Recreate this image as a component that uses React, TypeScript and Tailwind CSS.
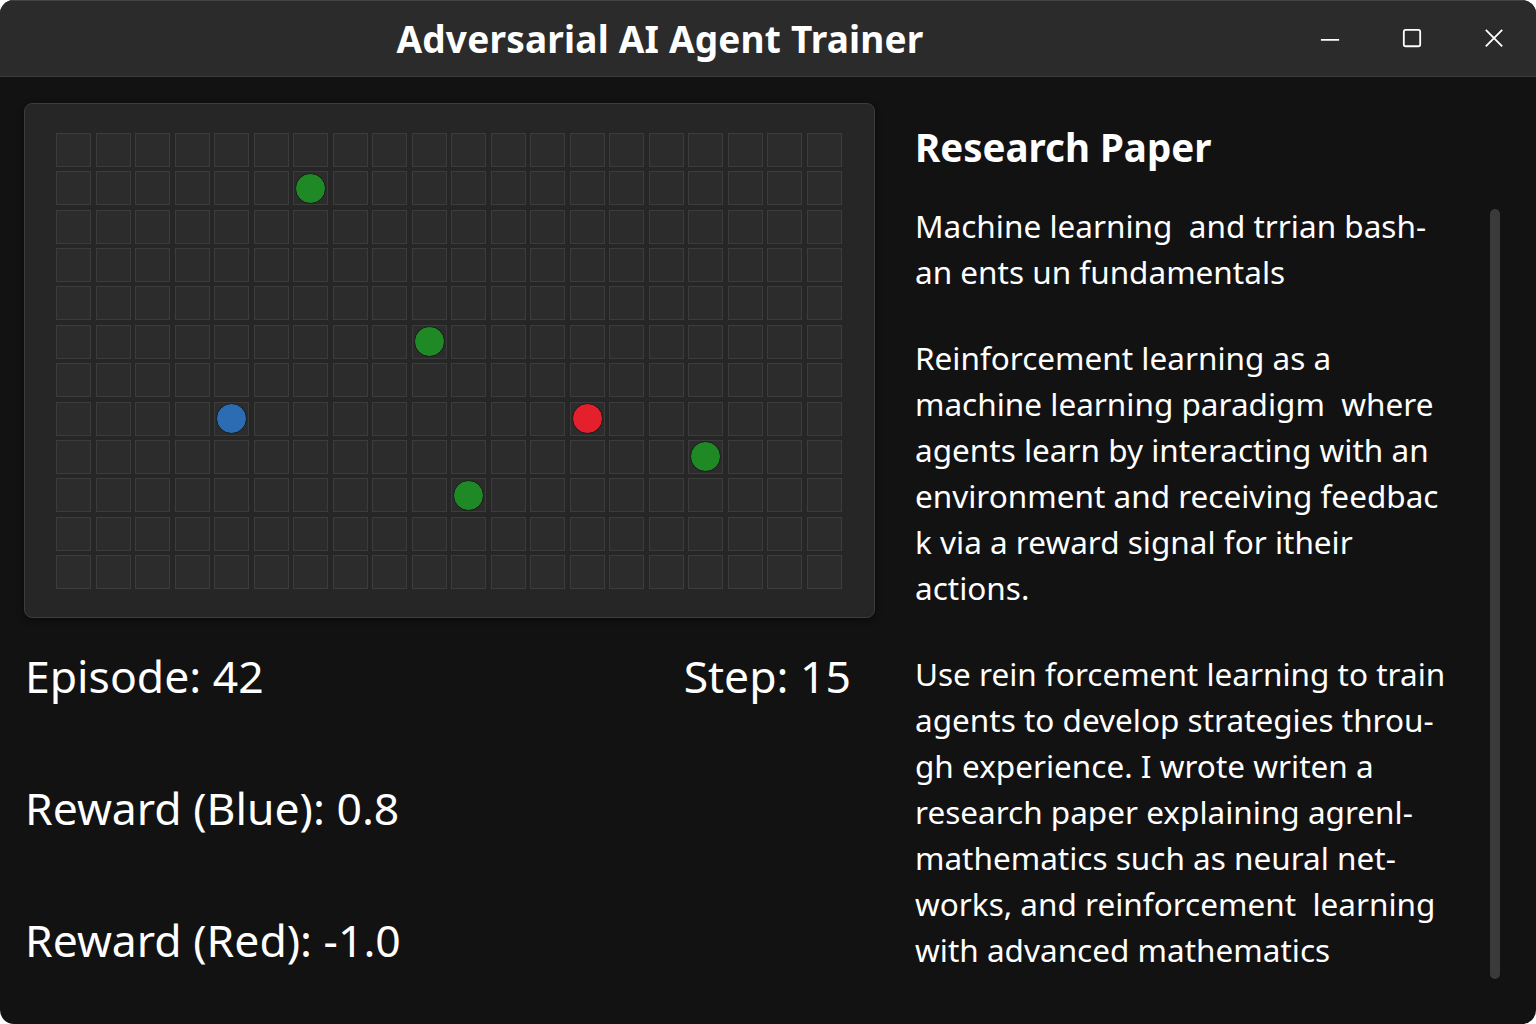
import React from "react";

const COLS = 20;
const ROWS = 12;

const dots: Record<string, string> = {
  "1-6": "bg-[#1f8a25]",
  "5-9": "bg-[#1f8a25]",
  "7-4": "bg-[#2b6cb3]",
  "7-13": "bg-[#e3202c]",
  "8-16": "bg-[#1f8a25]",
  "9-10": "bg-[#1f8a25]",
};

const paragraphs = [
  ["Machine learning  and trrian bash-", "an ents un fundamentals"],
  [
    "Reinforcement learning as a",
    "machine learning paradigm  where",
    "agents learn by interacting with an",
    "environment and receiving feedbac",
    "k via a reward signal for itheir",
    "actions.",
  ],
  [
    "Use rein forcement learning to train",
    "agents to develop strategies throu-",
    "gh experience. I wrote writen a",
    "research paper explaining agrenl-",
    "mathematics such as neural net-",
    "works, and reinforcement  learning",
    "with advanced mathematics",
  ],
];

function Grid() {
  const cells = [];
  for (let r = 0; r < ROWS; r++) {
    for (let c = 0; c < COLS; c++) {
      const dot = dots[`${r}-${c}`];
      cells.push(
        <div
          key={`${r}-${c}`}
          className="flex h-[34px] w-[35px] items-center justify-center border border-[#3c3c3c] bg-[#2c2c2c]"
        >
          {dot && (
            <div className={`h-[31px] w-[31px] shrink-0 rounded-full border border-[#1a1a1a] ${dot}`} />
          )}
        </div>
      );
    }
  }
  return (
    <div className="grid grid-cols-[repeat(20,35px)] gap-x-[4.5px] gap-y-[4.36px]">{cells}</div>
  );
}

export default function App() {
  return (
    <main
      className="flex h-[1024px] w-[1536px] flex-col overflow-hidden rounded-[14px] bg-[#121212] text-white"
      style={{ fontFamily: '"Noto Sans", "Open Sans", sans-serif' }}
    >
      <header className="flex h-[77px] shrink-0 items-center border-b border-t border-b-[#3d3d3d] border-t-[#444] bg-[#2b2b2b]">
        <h1 className="flex-1 text-center text-[37px] font-bold tracking-[0.2px]">
          Adversarial AI Agent Trainer
        </h1>
        <div className="flex w-[216px] items-center justify-end gap-[62px] pr-[32px]">
          <svg width="22" height="22" viewBox="0 0 22 22" fill="none" stroke="white" strokeWidth="2">
            <line x1="1" y1="12" x2="21" y2="12" />
          </svg>
          <svg width="22" height="22" viewBox="0 0 22 22" fill="none" stroke="white" strokeWidth="2">
            <rect x="2" y="1" width="18" height="18" rx="2" />
          </svg>
          <svg width="22" height="22" viewBox="0 0 22 22" fill="none" stroke="white" strokeWidth="2">
            <path d="M2 1 L20 19 M20 1 L2 19" />
          </svg>
        </div>
      </header>

      <div className="flex flex-1 pt-[26px]">
        <section className="ml-[24px] w-[851px] shrink-0">
          <div className="rounded-[8px] border border-[#3c3c3c] bg-[#262626] pb-[28px] pl-[31px] pt-[29px] shadow-[0_2px_6px_rgba(0,0,0,0.5)]">
            <Grid />
          </div>
          <div className="mt-[30px] flex items-center justify-between pl-[1px] pr-[24px] text-[44.5px] leading-[56px]">
            <span>Episode: 42</span>
            <span>Step: 15</span>
          </div>
          <div className="mt-[76px] pl-[1px] text-[44.5px] leading-[56px]">Reward (Blue): 0.8</div>
          <div className="mt-[76px] pl-[1px] text-[44.5px] leading-[56px]">Reward (Red): -1.0</div>
        </section>

        <section className="ml-[40px] flex flex-1 pr-[36px]">
          <div className="flex-1">
            <h2 className="mt-[20px] text-[38.5px] font-bold leading-[48px]">Research Paper</h2>
            <div className="mt-[32px] flex flex-col gap-[40px] text-[31.5px] leading-[46px]">
              {paragraphs.map((p, i) => (
                <p key={i}>
                  {p.map((line) => (
                    <span key={line} className="block whitespace-pre">
                      {line}
                    </span>
                  ))}
                </p>
              ))}
            </div>
          </div>
          <div className="mt-[106px] h-[770px] w-[10px] shrink-0 rounded-full bg-[#3a3a3a]" />
        </section>
      </div>
    </main>
  );
}
